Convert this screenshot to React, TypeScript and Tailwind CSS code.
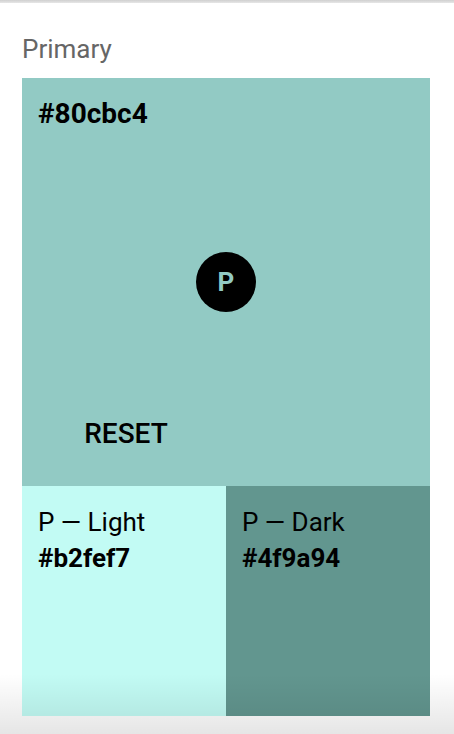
import React from 'react';

interface ShadeProps {
  label: string;
  hex: string;
  className: string;
}

const Shade: React.FC<ShadeProps> = ({ label, hex, className }) => (
  <div className={`${className} px-4 pt-[18px] text-black`}>
    <div className="text-[26px] leading-[36px]">{label}</div>
    <div className="text-[26px] leading-[36px] font-bold">{hex}</div>
  </div>
);

const App: React.FC = () => {
  return (
    <div className="relative h-[734px] w-[454px] overflow-hidden bg-white font-['Roboto',sans-serif]">
      <div className="h-[3px] bg-gradient-to-b from-[#d0d0d0] to-[#e6e6e6]" />
      <div className="px-[22px]">
        <h2 className="mt-[32px] text-[26px] leading-[28px] font-normal text-[#666666]">Primary</h2>
        <div className="mt-[15px] grid h-[408px] w-[408px] grid-rows-[1fr_auto_1fr] bg-[#92cac4]">
          <div className="px-4 pt-[21px] text-[28px] leading-[30px] font-bold text-black">#80cbc4</div>
          <div className="flex items-center justify-center">
            <div className="flex h-[60px] w-[60px] items-center justify-center rounded-full bg-black text-[26px] font-bold text-[#92cac4]">
              P
            </div>
          </div>
          <div className="grid grid-cols-2 items-end pb-[37px]">
            <button type="button" className="pl-[4px] text-[28px] leading-[30px] font-medium text-black">
              RESET
            </button>
          </div>
        </div>
        <div className="grid h-[230px] w-[408px] grid-cols-2">
          <Shade label="P — Light" hex="#b2fef7" className="bg-[#c2fbf4]" />
          <Shade label="P — Dark" hex="#4f9a94" className="bg-[#62968f]" />
        </div>
      </div>
      <div className="pointer-events-none absolute inset-x-0 bottom-0 h-[60px] bg-gradient-to-b from-transparent to-black/10" />
    </div>
  );
};

export default App;
